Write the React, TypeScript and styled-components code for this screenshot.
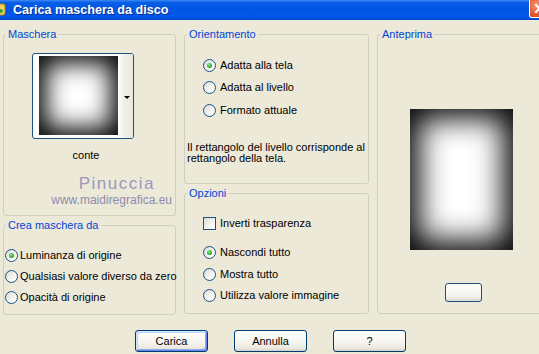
import styled, { createGlobalStyle } from "styled-components";

const Global = createGlobalStyle`
  html, body { margin: 0; padding: 0; background: #ece9d8; overflow: hidden; }
  body { font-family: "Liberation Sans", Arial, sans-serif; font-size: 11px; line-height: 13px; color: #000; }
`;

const Window = styled.div`
  width: 556px;
  height: 354px;
  background: #ece9d8;
  display: flex;
  flex-direction: column;
`;

const TitleBar = styled.div`
  height: 20px;
  display: flex;
  align-items: flex-start;
  padding-right: 6px;
  background: linear-gradient(180deg, #3d8af7 0%, #0a5fe6 12%, #0055e5 45%, #0058ea 85%, #0047c8 100%);
  color: #fff;
`;

const AppIcon = styled.svg`
  width: 16px;
  height: 16px;
  margin: 1px 0 0 -9px;
  flex: none;
`;

const Title = styled.div`
  margin: 2px 0 0 6px;
  font-weight: bold;
  font-size: 12.6px;
  line-height: 16px;
  text-shadow: 1px 1px 0 #0a2f8f;
  flex: 1;
`;

const CloseButton = styled.div`
  width: 21px;
  height: 18px;
  box-sizing: border-box;
  border: 1px solid #fff;
  border-top: none;
  border-radius: 0 0 3px 3px;
  background: radial-gradient(circle at 35% 30%, #f29a78 0%, #e15a2e 55%, #c23c16 100%);
  display: flex;
  align-items: center;
  justify-content: center;
`;

const Content = styled.div`
  display: flex;
  gap: 8px;
  padding: 8px 0 0 3px;
`;

const Column = styled.div<{ $w: number }>`
  width: ${(p) => p.$w}px;
  display: flex;
  flex-direction: column;
  gap: 3px;
  flex: none;
`;

const Group = styled.fieldset<{ $h: number }>`
  margin: 0;
  height: ${(p) => p.$h}px;
  box-sizing: border-box;
  border: 1px solid #d0d0bf;
  border-radius: 3px;
  padding: 0;
  min-width: 0;
  display: flex;
  flex-direction: column;
`;

const Legend = styled.legend`
  color: #0046d5;
  padding: 0 2px;
  margin-left: 2px;
  line-height: 13px;
`;

const Thumb = styled.div`
  margin: 12px 0 0 28px;
  width: 102px;
  height: 86px;
  box-sizing: border-box;
  border: 1px solid #1c5180;
  border-radius: 3px;
  background: #fff;
  display: flex;
  padding: 2px 0 0 6px;
`;

const SoftSquare = styled.div<{ $w: number; $h: number; $blur: number; $spread: number }>`
  width: ${(p) => p.$w}px;
  height: ${(p) => p.$h}px;
  flex: none;
  background: #fff;
  box-shadow: inset 0 0 ${(p) => p.$blur}px ${(p) => p.$spread}px #000;
`;

const DropStrip = styled.div`
  flex: 1;
  margin: -2px 0 0 0;
  border-radius: 0 2px 2px 0;
  background: linear-gradient(90deg, #fff 0%, #f1efe6 40%, #ebe9df 100%);
  display: flex;
  align-items: center;
  justify-content: flex-end;
  padding-right: 3px;
  &::after {
    content: "";
    border-left: 3px solid transparent;
    border-right: 3px solid transparent;
    border-top: 3px solid #000;
    margin-top: 2px;
  }
`;

const Caption = styled.div`
  margin: 10px 0 0 0;
  width: 164px;
  text-align: center;
`;

const Watermark = styled.div`
  margin-top: 13px;
  text-align: right;
  padding-right: 3px;
  color: #9898c0;
`;

const WatermarkName = styled.div`
  font-size: 17px;
  line-height: 18px;
  letter-spacing: 1.5px;
  padding-right: 17px;
`;

const WatermarkUrl = styled.div`
  font-size: 12px;
  line-height: 14px;
  color: #8c8cae;
`;

const Options = styled.div<{ $mt: number; $pl?: number }>`
  margin-top: ${(p) => p.$mt}px;
  padding-left: ${(p) => p.$pl ?? 0}px;
  display: flex;
  flex-direction: column;
`;

const Row = styled.label<{ $h: number; $gap?: number }>`
  height: ${(p) => p.$h}px;
  display: flex;
  align-items: center;
  gap: ${(p) => p.$gap ?? 4}px;
  white-space: nowrap;
`;

const Radio = styled.span<{ $on?: boolean }>`
  width: 13px;
  height: 13px;
  box-sizing: border-box;
  border-radius: 50%;
  border: 1px solid #1c5180;
  background: linear-gradient(135deg, #dcdcd7 0%, #f3f3ef 55%, #fff 100%);
  display: flex;
  align-items: center;
  justify-content: center;
  flex: none;
  &::after {
    content: "";
    display: ${(p) => (p.$on ? "block" : "none")};
    width: 5px;
    height: 5px;
    border-radius: 50%;
    background: radial-gradient(circle at 40% 35%, #8ee88e 0%, #21a121 70%);
  }
`;

const Check = styled.span`
  width: 13px;
  height: 13px;
  box-sizing: border-box;
  border: 1px solid #1c5180;
  background: linear-gradient(135deg, #dcdcd7 0%, #f3f3ef 55%, #fff 100%);
  flex: none;
`;

const Note = styled.p`
  margin: 20px 0 0 2px;
  width: 178px;
  line-height: 11px;
`;

const Preview = styled.div`
  margin: 68px 0 0 32px;
`;

const SmallButton = styled.div`
  margin: 33px 0 0 67px;
  width: 37px;
  height: 19px;
  box-sizing: border-box;
  border: 1px solid #1c5180;
  border-radius: 3px;
  background: linear-gradient(180deg, #fff 0%, #f4f3ee 70%, #dcdad0 100%);
`;

const ButtonRow = styled.div`
  display: flex;
  gap: 26px;
  padding: 15px 0 0 135px;
`;

const Button = styled.button<{ $default?: boolean }>`
  width: 73px;
  height: 22px;
  box-sizing: border-box;
  border: 1px solid #003c74;
  border-radius: 3px;
  font: inherit;
  color: #000;
  padding: 0;
  background: linear-gradient(180deg, #fff 0%, #f6f5f0 55%, #ebe9e1 85%, #d6d0c5 100%);
  box-shadow: ${(p) =>
    p.$default
      ? "inset 1px 1px 0 #cee7ff, inset -1px -1px 0 #6982ee, inset 2px 2px 0 #bcd4f6, inset -2px -2px 0 #89ade4"
      : "none"};
`;

export default function App() {
  return (
    <Window>
      <Global />
      <TitleBar>
        <AppIcon viewBox="0 0 16 16">
          <rect x="2" y="3" width="12" height="11" rx="2" fill="#f4d35e" stroke="#b8860b" />
          <circle cx="6" cy="7" r="2" fill="#e0442c" />
          <circle cx="10" cy="10" r="2" fill="#3aa33a" />
        </AppIcon>
        <Title>Carica maschera da disco</Title>
        <CloseButton>
          <svg width="11" height="11" viewBox="0 0 11 11">
            <path d="M2 2 L9 9 M9 2 L2 9" stroke="#fff" strokeWidth="2" strokeLinecap="square" />
          </svg>
        </CloseButton>
      </TitleBar>

      <Content>
        <Column $w={173}>
          <Group $h={188}>
            <Legend>Maschera</Legend>
            <Thumb>
              <SoftSquare $w={79} $h={79} $blur={24} $spread={7} />
              <DropStrip />
            </Thumb>
            <Caption>conte</Caption>
            <Watermark>
              <WatermarkName>Pinuccia</WatermarkName>
              <WatermarkUrl>www.maidiregrafica.eu</WatermarkUrl>
            </Watermark>
          </Group>
          <Group $h={96}>
            <Legend>Crea maschera da</Legend>
            <Options $mt={13} $pl={1}>
              <Row $h={21} $gap={2}>
                <Radio $on />
                Luminanza di origine
              </Row>
              <Row $h={21} $gap={2}>
                <Radio />
                Qualsiasi valore diverso da zero
              </Row>
              <Row $h={21} $gap={2}>
                <Radio />
                Opacità di origine
              </Row>
            </Options>
          </Group>
        </Column>

        <Column $w={185}>
          <Group $h={156}>
            <Legend>Orientamento</Legend>
            <Options $mt={13} $pl={18}>
              <Row $h={22.5}>
                <Radio $on />
                Adatta alla tela
              </Row>
              <Row $h={22.5}>
                <Radio />
                Adatta al livello
              </Row>
              <Row $h={22.5}>
                <Radio />
                Formato attuale
              </Row>
            </Options>
            <Note>Il rettangolo del livello corrisponde al rettangolo della tela.</Note>
          </Group>
          <Group $h={127}>
            <Legend>Opzioni</Legend>
            <Options $mt={12} $pl={18}>
              <Row $h={22}>
                <Check />
                Inverti trasparenza
              </Row>
            </Options>
            <Options $mt={8} $pl={18}>
              <Row $h={21.5}>
                <Radio $on />
                Nascondi tutto
              </Row>
              <Row $h={21.5}>
                <Radio />
                Mostra tutto
              </Row>
              <Row $h={21.5}>
                <Radio />
                Utilizza valore immagine
              </Row>
            </Options>
          </Group>
        </Column>

        <Column $w={175}>
          <Group $h={286}>
            <Legend>Anteprima</Legend>
            <Preview>
              <SoftSquare $w={103} $h={141} $blur={30} $spread={9} />
            </Preview>
            <SmallButton />
          </Group>
        </Column>
      </Content>

      <ButtonRow>
        <Button $default>Carica</Button>
        <Button>Annulla</Button>
        <Button>?</Button>
      </ButtonRow>
    </Window>
  );
}
